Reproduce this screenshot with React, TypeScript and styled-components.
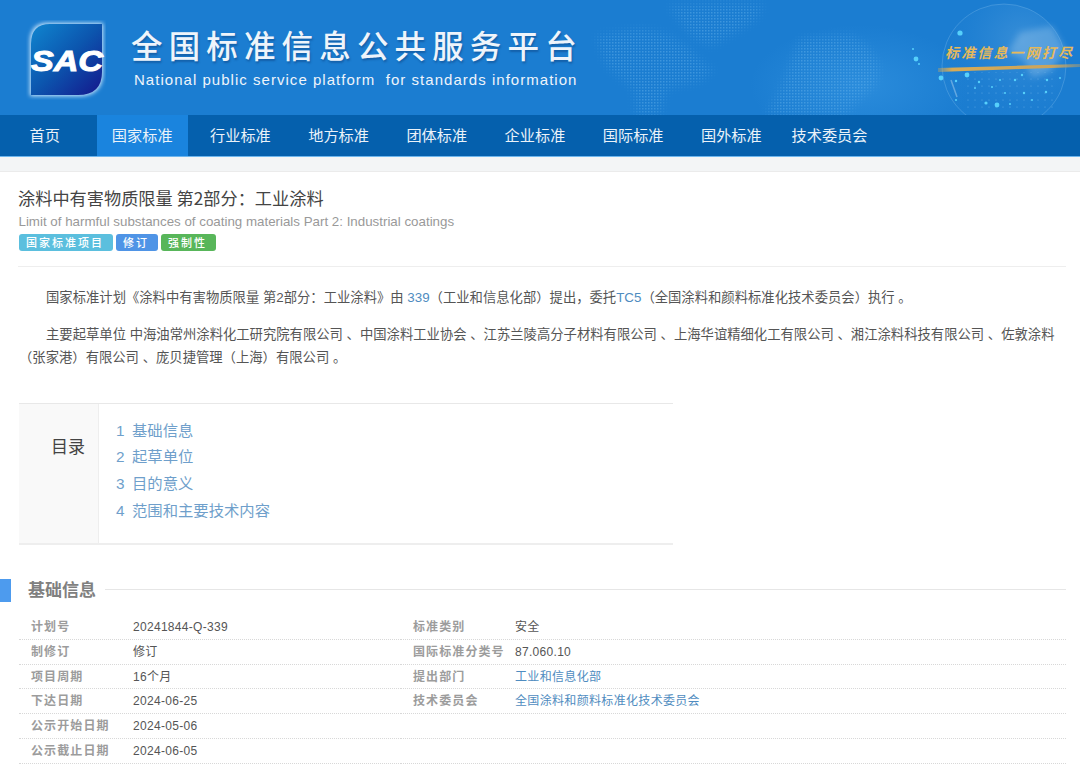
import React from "react";
import styled, { createGlobalStyle } from "styled-components";

const Global = createGlobalStyle`
  html, body { margin: 0; padding: 0; background: #fff; }
  body { font-family: "Liberation Sans", "Noto Sans CJK SC", sans-serif; color: #555; }
  a { text-decoration: none; }
`;

const Page = styled.div`
  width: 1080px;
  height: 777px;
  overflow: hidden;
`;

const Banner = styled.header`
  position: relative;
  height: 115px;
  background: #1b7dd1;
  overflow: hidden;
`;

const BannerArt = styled.svg`
  position: absolute;
  inset: 0;
`;

const Brand = styled.div`
  position: relative;
  display: flex;
  align-items: flex-start;
  padding: 20px 0 0 26px;
  gap: 25px;
`;

const BrandText = styled.div`
  display: flex;
  flex-direction: column;
  padding-top: 2px;
`;

const BrandCn = styled.div`
  font-family: "Noto Sans CJK SC", sans-serif;
  font-weight: 500;
  font-size: 31.5px;
  line-height: 44px;
  letter-spacing: 6.15px;
  color: #eef4fb;
  white-space: nowrap;
  text-shadow: 1px 2px 2px rgba(10, 60, 120, 0.45);
`;

const BrandEn = styled.div`
  font-size: 15px;
  line-height: 20px;
  margin: 4px 0 0 3px;
  letter-spacing: 1.03px;
  color: #eef4fb;
  white-space: pre;
`;

const Nav = styled.nav`
  display: flex;
  gap: 7.2px;
  height: 41px;
  background: #0560ad;
  border-bottom: 1px solid #6db6ee;
`;

const NavItem = styled.a<{ $active?: boolean; $first?: boolean }>`
  width: ${(p) => (p.$first ? "89.5px" : "91px")};
  line-height: 39px;
  text-align: center;
  font-family: "Noto Sans CJK SC", sans-serif;
  font-size: 15.2px;
  color: #eaf2f9;
  white-space: nowrap;
  background: ${(p) => (p.$active ? "#1a84de" : "transparent")};
`;

const Strip = styled.div`
  height: 14px;
  background: #f3f5f6;
  border-bottom: 1px solid #ebebeb;
`;

const Intro = styled.section`
  margin: 0 14px 0 18px;
  padding-top: 14px;
  height: 80px;
  border-bottom: 1px solid #eee;
`;

const Title = styled.h1`
  margin: 0;
  font-family: "Noto Sans CJK SC", sans-serif;
  font-weight: 400;
  font-size: 17.2px;
  line-height: 24px;
  color: #444;
`;

const SubTitle = styled.div`
  font-size: 13.33px;
  line-height: 17px;
  margin: 3px 0 0 0.5px;
  color: #999;
`;

const Badges = styled.div`
  display: flex;
  gap: 3px;
  margin: 4px 0 0 1px;
`;

const Badge = styled.span<{ $bg: string }>`
  height: 17px;
  line-height: 17px;
  padding: 0 9px 0 7px;
  border-radius: 3px;
  background: ${(p) => p.$bg};
  color: #fff;
  font-family: "Noto Sans CJK SC", sans-serif;
  font-weight: 500;
  font-size: 11px;
  letter-spacing: 2px;
`;

const Body = styled.section`
  margin: 19px 14px 0 19px;
  font-family: "Liberation Sans", "Noto Sans CJK SC", sans-serif;
  font-size: 13.33px;
  line-height: 23px;
  color: #555;
`;

const Para = styled.p`
  margin: 0 0 14px 0;
  text-indent: 27px;
`;

const Link = styled.a`
  color: #4f8cc0;
`;

const Toc = styled.div`
  display: flex;
  width: 654px;
  height: 139px;
  margin: 34px 0 0 19px;
  border-top: 1px solid #e8e8e8;
  border-bottom: 2px solid #eee;
`;

const TocLabel = styled.div`
  width: 66px;
  padding: 30px 13px 0 0;
  text-align: right;
  background: #f9f9f9;
  border-right: 1px solid #eee;
  font-family: "Noto Sans CJK SC", sans-serif;
  font-size: 17px;
  line-height: 24px;
  color: #444;
`;

const TocList = styled.div`
  display: flex;
  flex-direction: column;
  padding: 13.5px 0 0 17px;
`;

const TocLink = styled.a`
  display: flex;
  gap: 7.5px;
  height: 26.7px;
  line-height: 26.7px;
  font-size: 15.33px;
  font-family: "Liberation Sans", "Noto Sans CJK SC", sans-serif;
  color: #6f9fcb;
`;

const SectionHead = styled.div`
  display: flex;
  align-items: center;
  height: 24px;
  margin-top: 33px;
  padding-right: 14px;
`;

const SectionMark = styled.div`
  width: 11px;
  height: 23px;
  background: #4d9bee;
`;

const SectionTitle = styled.h2`
  margin: -2px 9px 0 17px;
  font-family: "Noto Sans CJK SC", sans-serif;
  font-weight: 700;
  font-size: 17px;
  line-height: 24px;
  color: #808080;
`;

const SectionRule = styled.div`
  flex: 1;
  height: 1px;
  margin-top: -2px;
  background: #e6e6e6;
`;

const Table = styled.div`
  display: grid;
  grid-template-columns: 382px 1fr;
  margin: 13px 14px 0 19px;
`;

const Cell = styled.div`
  display: flex;
  height: 23.8px;
  line-height: 24px;
  border-bottom: 1px dotted #d8d8d8;
  font-family: "Liberation Sans", "Noto Sans CJK SC", sans-serif;
  font-size: 12px;
  white-space: nowrap;
`;

const Label = styled.span`
  width: 114px;
  padding-left: 12px;
  box-sizing: border-box;
  font-weight: 700;
  letter-spacing: 1.1px;
  color: #9c9c9c;
`;

const Value = styled.span`
  letter-spacing: 0.3px;
  color: #555;
`;

const ValueLink = styled.a`
  letter-spacing: 0.33px;
  color: #4f8cc0;
`;

const Logo = () => (
  <svg width="80" height="80" viewBox="0 0 80 80">
    <defs>
      <linearGradient id="lg" x1="0" y1="0" x2="1" y2="1">
        <stop offset="0" stopColor="#0f86d0" />
        <stop offset="0.5" stopColor="#0c55ae" />
        <stop offset="1" stopColor="#14178c" />
      </linearGradient>
      <filter id="gl" x="-20%" y="-20%" width="140%" height="140%">
        <feGaussianBlur stdDeviation="2" />
      </filter>
    </defs>
    <path d="M22 3H77V52Q77 76 52 76H4V22Q4 3 22 3Z" fill="#cfe8fb" filter="url(#gl)" />
    <path d="M24 4H76V52Q76 75 52 75H5V24Q5 4 24 4Z" fill="url(#lg)" />
    <text
      x="5"
      y="51"
      textLength="72"
      lengthAdjust="spacingAndGlyphs"
      fontFamily="Liberation Sans"
      fontWeight="700"
      fontStyle="italic"
      fontSize="30"
      fill="#fff"
      stroke="#fff"
      strokeWidth="1"
    >
      SAC
    </text>
  </svg>
);

const glowDots: [number, number, number][] = [
  [960, 33, 2.6], [916, 59, 2.4], [941, 78, 2.4], [967, 75, 2.4], [997, 105, 2.4], [986, 103, 1.6],
  [913, 49, 1], [919, 64, 1], [956, 81, 1.2], [979, 82, 1.2], [992, 87, 1], [1015, 80, 1.2],
  [1046, 92, 1.2], [1047, 80, 1.2], [1024, 93, 1.2], [1005, 93, 1], [1022, 75, 1.2], [1000, 80, 1],
  [1060, 78, 1], [956, 100, 1], [975, 88, 1], [1032, 100, 1], [1010, 104, 1],
];

const BannerBackdrop = () => (
  <BannerArt width="1080" height="115" viewBox="0 0 1080 115">
    <defs>
      <pattern id="dots" width="3" height="3" patternUnits="userSpaceOnUse">
        <rect width="1.5" height="1.5" fill="#6cb8ee" />
      </pattern>
      <pattern id="lattice" width="7" height="7" patternUnits="userSpaceOnUse">
        <circle cx="2" cy="2" r="0.6" fill="#8fc8f2" />
      </pattern>
      <filter id="mapBlur" x="-10%" y="-10%" width="120%" height="120%"><feGaussianBlur stdDeviation="4" /></filter>
      <mask id="mapMask">
        <g fill="#fff" filter="url(#mapBlur)">
          <path d="M596 36L640 28L668 34L690 48L700 60L714 70L700 82L668 88L660 115L636 115L634 90L606 66Z" />
          <path d="M668 6L720 3L764 4L756 20L730 36L712 46L694 40L680 22Z" />
          <path d="M800 38L850 34L868 46L880 66L876 84L860 100L846 115L766 115L780 90L790 64Z" />
        </g>
      </mask>
      <radialGradient id="shine" cx="0.5" cy="0.5" r="0.5">
        <stop offset="0" stopColor="#3a9be6" stopOpacity="0.5" />
        <stop offset="1" stopColor="#3a9be6" stopOpacity="0" />
      </radialGradient>
      <radialGradient id="globe" cx="0.65" cy="0.3" r="0.75">
        <stop offset="0" stopColor="#6fb0e4" stopOpacity="0.35" />
        <stop offset="0.6" stopColor="#2f8ad8" stopOpacity="0.2" />
        <stop offset="1" stopColor="#1577c9" stopOpacity="0.05" />
      </radialGradient>
      <linearGradient id="streak" x1="0" y1="0" x2="1" y2="0">
        <stop offset="0" stopColor="#d8ab55" stopOpacity="0.3" />
        <stop offset="0.1" stopColor="#d8ab55" />
        <stop offset="0.8" stopColor="#cba45c" />
        <stop offset="1" stopColor="#cba45c" stopOpacity="0.4" />
      </linearGradient>
      <filter id="soft"><feGaussianBlur stdDeviation="3" /></filter>
      <filter id="softer"><feGaussianBlur stdDeviation="0.5" /></filter>
    </defs>
    <ellipse cx="860" cy="85" rx="110" ry="60" fill="url(#shine)" />
    <rect x="590" y="0" width="310" height="115" fill="url(#dots)" mask="url(#mapMask)" opacity="0.42" />
    <circle cx="1004" cy="66" r="62" fill="url(#globe)" stroke="#8cc4ef" strokeOpacity="0.3" />
    <path d="M962 72H1058V112H962Z" fill="url(#lattice)" opacity="0.5" />
    <path d="M1020 32L1052 26L1066 50L1050 72L1032 78L1024 60L1008 52Z" fill="#a9cfee" opacity="0.35" filter="url(#soft)" />
    <path d="M951 80L957 97" stroke="#a9cfee" strokeWidth="1.5" opacity="0.5" />
    <g fill="#57d0fb">
      {glowDots.map(([x, y, r], i) => (
        <circle key={i} cx={x} cy={y} r={r} filter={r > 2 ? "url(#softer)" : undefined} />
      ))}
    </g>
    <path d="M938 68L1080 64L1080 67L938 72Z" fill="url(#streak)" filter="url(#softer)" />
    <text
      x="945"
      y="58"
      textLength="127"
      fontFamily="Noto Sans CJK SC"
      fontWeight="700"
      fontStyle="italic"
      fontSize="14"
      fill="#e6b95a"
    >
      标准信息一网打尽
    </text>
  </BannerArt>
);

const navItems = ["首页", "国家标准", "行业标准", "地方标准", "团体标准", "企业标准", "国际标准", "国外标准", "技术委员会"];

const tocItems = ["基础信息", "起草单位", "目的意义", "范围和主要技术内容"];

type Row = { label: string; value: string; link?: boolean };

const rows: Row[] = [
  { label: "计划号", value: "20241844-Q-339" },
  { label: "标准类别", value: "安全" },
  { label: "制修订", value: "修订" },
  { label: "国际标准分类号", value: "87.060.10" },
  { label: "项目周期", value: "16个月" },
  { label: "提出部门", value: "工业和信息化部", link: true },
  { label: "下达日期", value: "2024-06-25" },
  { label: "技术委员会", value: "全国涂料和颜料标准化技术委员会", link: true },
  { label: "公示开始日期", value: "2024-05-06" },
  { label: "", value: "" },
  { label: "公示截止日期", value: "2024-06-05" },
  { label: "", value: "" },
];

export default function App() {
  return (
    <Page>
      <Global />
      <Banner>
        <BannerBackdrop />
        <Brand>
          <Logo />
          <BrandText>
            <BrandCn>全国标准信息公共服务平台</BrandCn>
            <BrandEn>National public service platform  for standards information</BrandEn>
          </BrandText>
        </Brand>
      </Banner>
      <Nav>
        {navItems.map((n, i) => (
          <NavItem key={n} $first={i === 0} $active={i === 1}>{n}</NavItem>
        ))}
      </Nav>
      <Strip />
      <Intro>
        <Title>涂料中有害物质限量 第2部分：工业涂料</Title>
        <SubTitle>Limit of harmful substances of coating materials Part 2: Industrial coatings</SubTitle>
        <Badges>
          <Badge $bg="#5bbfde">国家标准项目</Badge>
          <Badge $bg="#4f94e6">修订</Badge>
          <Badge $bg="#58b65a">强制性</Badge>
        </Badges>
      </Intro>
      <Body>
        <Para>
          国家标准计划《涂料中有害物质限量 第2部分：工业涂料》由 <Link>339</Link>（工业和信息化部）提出，委托<Link>TC5</Link>（全国涂料和颜料标准化技术委员会）执行 。
        </Para>
        <Para>
          主要起草单位 中海油常州涂料化工研究院有限公司 、中国涂料工业协会 、江苏兰陵高分子材料有限公司 、上海华谊精细化工有限公司 、湘江涂料科技有限公司 、佐敦涂料（张家港）有限公司 、庞贝捷管理（上海）有限公司 。
        </Para>
      </Body>
      <Toc>
        <TocLabel>目录</TocLabel>
        <TocList>
          {tocItems.map((t, i) => (
            <TocLink key={t}>
              <span>{i + 1}</span>
              <span>{t}</span>
            </TocLink>
          ))}
        </TocList>
      </Toc>
      <SectionHead>
        <SectionMark />
        <SectionTitle>基础信息</SectionTitle>
        <SectionRule />
      </SectionHead>
      <Table>
        {rows.map((r, i) => (
          <Cell key={i}>
            <Label>{r.label}</Label>
            {r.link ? <ValueLink>{r.value}</ValueLink> : <Value>{r.value}</Value>}
          </Cell>
        ))}
      </Table>
    </Page>
  );
}
